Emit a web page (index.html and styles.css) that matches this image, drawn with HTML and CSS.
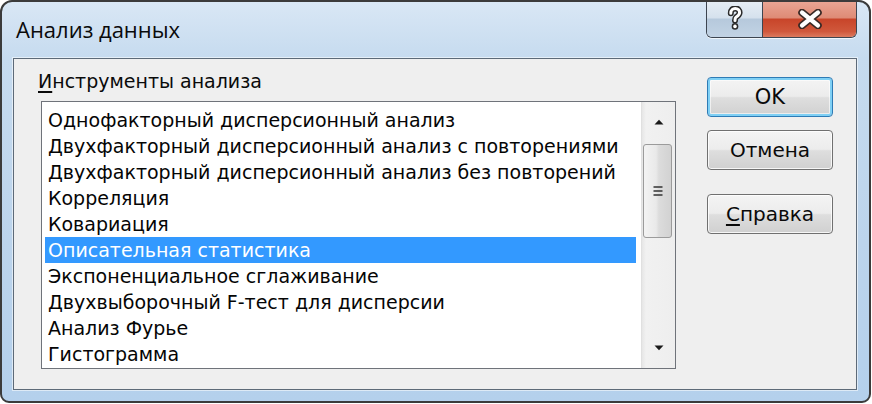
FILE: index.html
```html
<!DOCTYPE html>
<html lang="ru">
<head>
<meta charset="utf-8">
<title>Анализ данных</title>
<link rel="stylesheet" href="styles.css">
</head>
<body>
<div class="window">
  <div class="titlebar">
    <div class="title">Анализ данных</div>
    <div class="caption-buttons">
      <div class="cap-btn help">
        <svg width="16" height="26" viewBox="0 0 16 26">
          <path d="M3.8 7.2 C3.8 3.8 6 2.4 8.2 2.4 C10.8 2.4 12.6 4.2 12.6 6.6 C12.6 9.2 10.4 10.2 9 11.2 C8.3 11.8 8 12.6 8 14.6" fill="none" stroke="#2b2b2b" stroke-width="6" stroke-linecap="round"/>
          <circle cx="8" cy="20.4" r="3.3" fill="#2b2b2b"/>
          <path d="M3.8 7.2 C3.8 3.8 6 2.4 8.2 2.4 C10.8 2.4 12.6 4.2 12.6 6.6 C12.6 9.2 10.4 10.2 9 11.2 C8.3 11.8 8 12.6 8 14.6" fill="none" stroke="#ffffff" stroke-width="3" stroke-linecap="round"/>
          <circle cx="8" cy="20.4" r="1.8" fill="#ffffff"/>
        </svg>
      </div>
      <div class="cap-btn close">
        <svg width="26" height="20" viewBox="0 0 26 20">
          <path d="M5 3.5 L21 16.5 M21 3.5 L5 16.5" fill="none" stroke="#3a2a26" stroke-width="7.5" stroke-linecap="round"/>
          <path d="M5 3.5 L21 16.5 M21 3.5 L5 16.5" fill="none" stroke="#ffffff" stroke-width="4.2" stroke-linecap="round"/>
        </svg>
      </div>
    </div>
  </div>
  <div class="client">
    <div class="left-col">
      <div class="label"><u>И</u>нструменты анализа</div>
      <div class="listbox">
        <div class="items">
          <div class="item">Однофакторный дисперсионный анализ</div>
          <div class="item">Двухфакторный дисперсионный анализ с повторениями</div>
          <div class="item">Двухфакторный дисперсионный анализ без повторений</div>
          <div class="item">Корреляция</div>
          <div class="item">Ковариация</div>
          <div class="item selected">Описательная статистика</div>
          <div class="item">Экспоненциальное сглаживание</div>
          <div class="item">Двухвыборочный F-тест для дисперсии</div>
          <div class="item">Анализ Фурье</div>
          <div class="item">Гистограмма</div>
        </div>
        <div class="scrollbar">
          <div class="sb-btn">
            <svg width="12" height="8" viewBox="0 0 12 8"><path d="M1.5 6.5 L6 1.8 L10.5 6.5 Z" fill="#1a1a1a"/></svg>
          </div>
          <div class="thumb">
            <svg width="12" height="12" viewBox="0 0 12 12">
              <path d="M1.5 2 H10.5 M1.5 6 H10.5 M1.5 10 H10.5" stroke="#333" stroke-width="1.6"/>
            </svg>
          </div>
          <div class="sb-track"></div>
          <div class="sb-btn">
            <svg width="12" height="8" viewBox="0 0 12 8"><path d="M1.5 1.5 L6 6.2 L10.5 1.5 Z" fill="#1a1a1a"/></svg>
          </div>
        </div>
      </div>
    </div>
    <div class="buttons">
      <div class="btn default">OK</div>
      <div class="btn">Отмена</div>
      <div class="btn help-btn"><u>С</u>правка</div>
    </div>
  </div>
</div>
</body>
</html>
```

FILE: styles.css
```css
html, body {
  margin: 0;
  padding: 0;
  background: #ffffff;
}

body {
  width: 872px;
  height: 404px;
  overflow: hidden;
  font-family: "DejaVu Sans", "Liberation Sans", sans-serif;
}

.window {
  box-sizing: border-box;
  width: 871px;
  height: 403px;
  margin: 0;
  border: 2px solid #3b3b3b;
  border-radius: 12px 12px 9px 9px;
  background: linear-gradient(to bottom, #d9e7f5 0%, #c6dbef 14%, #bcd4ec 60%, #b4d0ec 100%);
  display: flex;
  flex-direction: column;
  padding: 0 12px 11px 11px;
  overflow: hidden;
}

.titlebar {
  height: 56px;
  display: flex;
  align-items: flex-start;
  flex-shrink: 0;
}

.title {
  font-family: "Open Sans", "Noto Sans", sans-serif;
  font-size: 22px;
  line-height: 30px;
  color: #0a0a0a;
  padding: 12px 0 0 3px;
}

.caption-buttons {
  margin-left: auto;
  margin-top: -2px;
  display: flex;
  height: 37px;
  border: 1px solid #3d4550;
  border-top: none;
  border-radius: 0 0 6px 6px;
  overflow: hidden;
  box-shadow: 0 1px 0 rgba(255,255,255,0.7);
}

.cap-btn {
  display: flex;
  align-items: center;
  justify-content: center;
}

.cap-btn.help {
  width: 55px;
  background: linear-gradient(to bottom, #e8eff6 0%, #d5e1ed 48%, #b6c9dc 52%, #c2d3e4 100%);
  border-right: 1px solid #3d4550;
}

.cap-btn.close {
  width: 93px;
  background: linear-gradient(to bottom, #eaa897 0%, #de8b76 48%, #c8452a 52%, #d0583c 85%, #dc7a5e 100%);
}

.client {
  flex: 1;
  box-sizing: border-box;
  border: 1px solid #5d6a78;
  box-shadow: 0 0 0 1px rgba(255,255,255,0.55);
  background: #efefef;
  display: flex;
  padding: 10px 0 0 27px;
}

.left-col {
  display: flex;
  flex-direction: column;
}

.label {
  font-size: 19px;
  line-height: 24px;
  color: #0a0a0a;
  margin-left: -3px;
}

.label u, .btn u {
  text-decoration-thickness: 1.5px;
  text-underline-offset: 3px;
}

.listbox {
  margin-top: 8px;
  width: 635px;
  height: 268px;
  box-sizing: border-box;
  border: 1px solid #6f737a;
  background: #ffffff;
  display: flex;
}

.items {
  flex: 1;
  overflow: hidden;
  padding: 5px 5px 0 3px;
}

.item {
  height: 26px;
  line-height: 26px;
  font-size: 19px;
  color: #050505;
  padding-left: 3px;
  white-space: nowrap;
}

.item.selected {
  background: #3399ff;
  color: #ffffff;
}

.scrollbar {
  width: 33px;
  display: flex;
  flex-direction: column;
  background: linear-gradient(to right, #e6e6e6 0%, #f1f1f1 12%, #eeeeee 100%);
  border-left: 1px solid #e0e0e0;
}

.sb-btn {
  height: 40px;
  display: flex;
  align-items: center;
  justify-content: center;
  flex-shrink: 0;
}

.thumb {
  margin: 2px 3px 0 1px;
  height: 94px;
  flex-shrink: 0;
  box-sizing: border-box;
  border: 1px solid #9b9b9b;
  border-radius: 3px;
  background: linear-gradient(to right, #f3f3f3 0%, #e9e9e9 45%, #dcdcdc 55%, #d2d2d2 100%);
  display: flex;
  align-items: center;
  justify-content: center;
}

.sb-track {
  flex: 1;
}

.buttons {
  margin-left: 31px;
  margin-top: 8px;
  display: flex;
  flex-direction: column;
}

.btn {
  width: 126px;
  height: 40px;
  box-sizing: border-box;
  border: 1px solid #707070;
  border-radius: 4px;
  background: linear-gradient(to bottom, #f4f4f4 0%, #ececec 48%, #dedede 52%, #d0d0d0 100%);
  box-shadow: inset 0 0 0 1px rgba(255,255,255,0.8);
  font-size: 20px;
  color: #0a0a0a;
  display: flex;
  align-items: center;
  justify-content: center;
  margin-bottom: 13px;
}

.btn.default {
  border: 1px solid #2e7bb5;
  box-shadow: inset 0 0 0 2px #7fd0f5, inset 0 0 0 3px rgba(255,255,255,0.6);
  font-size: 21px;
}

.btn.help-btn {
  margin-top: 11px;
}
```
